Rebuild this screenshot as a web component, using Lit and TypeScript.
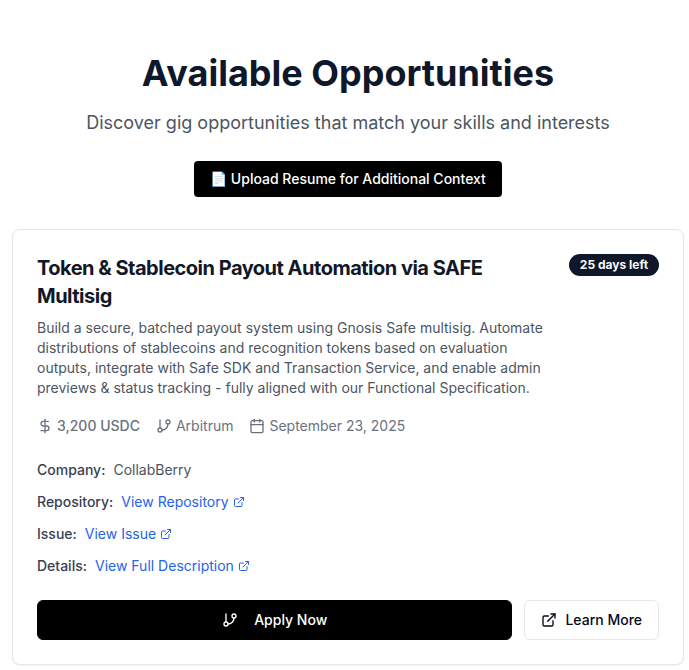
import { LitElement, html, css, svg } from 'lit';
import { customElement, property } from 'lit/decorators.js';

const icons = {
    dollar: svg`
        <line x1="12" x2="12" y1="2" y2="22" />
        <path d="M17 5H9.5a3.5 3.5 0 0 0 0 7h5a3.5 3.5 0 0 1 0 7H6" />
    `,
    branch: svg`
        <line x1="6" x2="6" y1="3" y2="15" />
        <circle cx="18" cy="6" r="3" />
        <circle cx="6" cy="18" r="3" />
        <path d="M18 9a9 9 0 0 1-9 9" />
    `,
    calendar: svg`
        <path d="M8 2v4" />
        <path d="M16 2v4" />
        <rect width="18" height="18" x="3" y="4" rx="2" />
        <path d="M3 10h18" />
    `,
    external: svg`
        <path d="M15 3h6v6" />
        <path d="M10 14 21 3" />
        <path d="M18 13v6a2 2 0 0 1-2 2H5a2 2 0 0 1-2-2V8a2 2 0 0 1 2-2h6" />
    `,
};

@customElement('ui-icon')
class UiIcon extends LitElement {
    @property() name: keyof typeof icons = 'external';

    static styles = css`
        :host {
            display: block;
            flex: none;
            width: 16px;
            height: 16px;
        }

        svg {
            display: block;
            width: 100%;
            height: 100%;
            fill: none;
            stroke: currentColor;
            stroke-width: 2;
            stroke-linecap: round;
            stroke-linejoin: round;
        }
    `;

    render() {
        return html`<svg viewBox="0 0 24 24">${icons[this.name]}</svg>`;
    }
}

@customElement('gig-card')
class GigCard extends LitElement {
    @property({ type: Object }) gig: any;

    static styles = css`
        :host {
            display: block;
            box-sizing: border-box;
            padding: 24px;
            border: 1px solid #e2e8f0;
            border-radius: 8px;
            background: #fff;
            box-shadow: 0 1px 2px rgba(0, 0, 0, 0.05);
        }

        .top {
            display: flex;
            align-items: flex-start;
            justify-content: space-between;
            gap: 16px;
        }

        h3 {
            margin: 0 0 8px;
            font-size: 20px;
            line-height: 28px;
            font-weight: 700;
            letter-spacing: -0.5px;
            color: #111827;
        }

        .description {
            margin: 0;
            color: #4b5563;
        }

        .badge {
            flex: none;
            box-sizing: border-box;
            width: 90px;
            padding: 3px 0;
            border-radius: 999px;
            background: #0f172a;
            color: #f8fafc;
            font-size: 12px;
            line-height: 16px;
            font-weight: 700;
            text-align: center;
        }

        .meta {
            display: flex;
            gap: 16px;
            margin: 18px 0 24px;
            color: #6b7280;
        }

        .meta span {
            display: flex;
            align-items: center;
            gap: 4px;
        }

        .meta .amount {
            font-weight: 500;
        }

        .rows {
            display: flex;
            flex-direction: column;
            gap: 12px;
            color: #4b5563;
        }

        .row {
            display: flex;
            gap: 8px;
        }

        .label {
            font-weight: 500;
            color: #374151;
        }

        a {
            display: flex;
            align-items: center;
            gap: 4px;
            color: #2563eb;
            text-decoration: none;
        }

        a ui-icon {
            width: 12px;
            height: 12px;
        }

        .actions {
            display: flex;
            gap: 12px;
            margin-top: 24px;
        }

        button {
            display: flex;
            align-items: center;
            justify-content: center;
            box-sizing: border-box;
            height: 40px;
            padding: 0 16px;
            border: 1px solid #e2e8f0;
            border-radius: 6px;
            background: #fff;
            color: #020817;
            font: inherit;
            font-weight: 500;
            gap: 8px;
        }

        .apply {
            flex: 1;
            gap: 16px;
            border-color: #000;
            background: #000;
            color: #fff;
        }
    `;

    render() {
        const { title, description, daysLeft, amount, network, date, company, links } = this.gig;
        return html`
            <div class="top">
                <div>
                    <h3>${title}</h3>
                    <p class="description">${description}</p>
                </div>
                <div class="badge">${daysLeft} days left</div>
            </div>
            <div class="meta">
                <span class="amount"><ui-icon name="dollar"></ui-icon>${amount}</span>
                <span><ui-icon name="branch"></ui-icon>${network}</span>
                <span><ui-icon name="calendar"></ui-icon>${date}</span>
            </div>
            <div class="rows">
                <div class="row"><span class="label">Company:</span><span>${company}</span></div>
                ${links.map(
                    (link) => html`
                        <div class="row">
                            <span class="label">${link.label}:</span>
                            <a href="#">${link.text}<ui-icon name="external"></ui-icon></a>
                        </div>
                    `
                )}
            </div>
            <div class="actions">
                <button class="apply"><ui-icon name="branch"></ui-icon>Apply Now</button>
                <button><ui-icon name="external"></ui-icon>Learn More</button>
            </div>
        `;
    }
}

@customElement('app-root')
class AppRoot extends LitElement {
    static styles = css`
        :host {
            display: block;
            box-sizing: border-box;
            height: 670px;
            overflow: hidden;
            padding: 53px 5px 0 12px;
            background: #fff;
            font-family: Inter, 'Liberation Sans', sans-serif;
            font-size: 14px;
            line-height: 20px;
        }

        header {
            display: flex;
            flex-direction: column;
            align-items: center;
            margin-bottom: 32px;
        }

        h1 {
            margin: 0 0 16px;
            font-size: 36px;
            line-height: 40px;
            font-weight: 700;
            color: #0f172a;
        }

        p {
            margin: 0 0 24px;
            font-size: 18px;
            line-height: 28px;
            color: #4b5563;
        }

        .upload {
            height: 36px;
            padding: 0 16px;
            border: 0;
            border-radius: 4px;
            background: #000;
            color: #fff;
            font: inherit;
            font-weight: 500;
        }
    `;

    gig = {
        title: 'Token & Stablecoin Payout Automation via SAFE Multisig',
        description:
            'Build a secure, batched payout system using Gnosis Safe multisig. Automate distributions of stablecoins and recognition tokens based on evaluation outputs, integrate with Safe SDK and Transaction Service, and enable admin previews & status tracking - fully aligned with our Functional Specification.',
        daysLeft: 25,
        amount: '3,200 USDC',
        network: 'Arbitrum',
        date: 'September 23, 2025',
        company: 'CollabBerry',
        links: [
            { label: 'Repository', text: 'View Repository' },
            { label: 'Issue', text: 'View Issue' },
            { label: 'Details', text: 'View Full Description' },
        ],
    };

    render() {
        return html`
            <header>
                <h1>Available Opportunities</h1>
                <p>Discover gig opportunities that match your skills and interests</p>
                <button class="upload">📄 Upload Resume for Additional Context</button>
            </header>
            <gig-card .gig=${this.gig}></gig-card>
        `;
    }
}
